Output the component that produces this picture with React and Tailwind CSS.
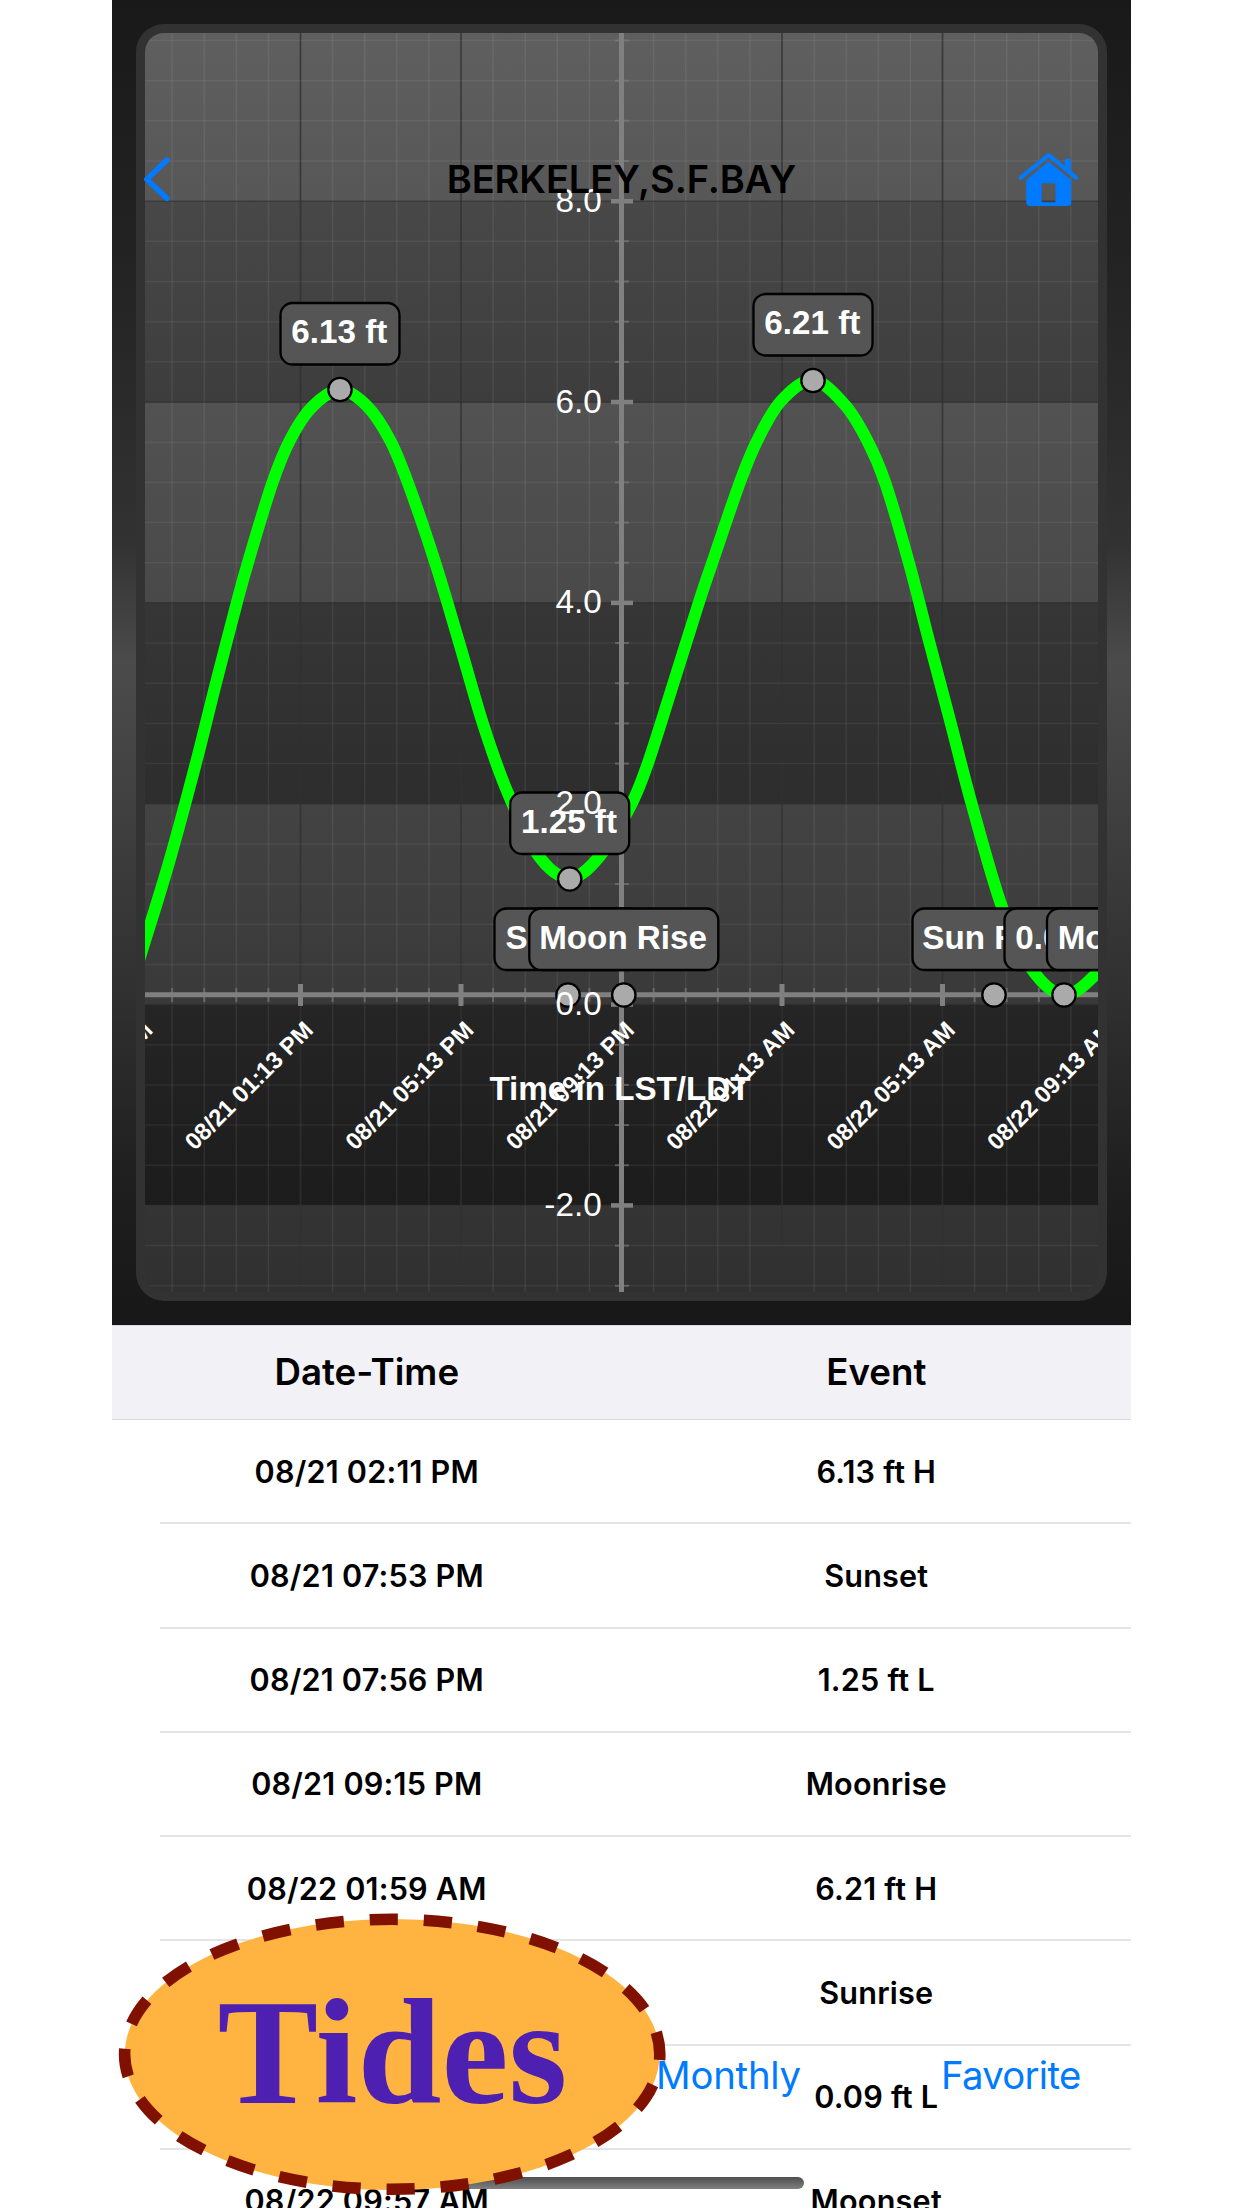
const TIDE_POINTS = [
  [120, 1020], [145, 941], [169.7, 860], [195.7, 764], [216, 683], [237, 602], [248.7, 560], [272, 484],
  [290, 440], [312, 407], [340, 390], [367, 406], [390, 440], [408, 483], [435, 562], [459, 642],
  [482.7, 723], [507, 791], [538, 855], [569.5, 878], [599, 857], [630.5, 806], [648, 763], [673.5, 683],
  [699, 602], [712.5, 562], [740, 482], [757.5, 440], [781, 401], [813, 380], [845, 405], [867, 440],
  [885, 482], [909, 563], [929.3, 642], [950.7, 723], [971.7, 804], [1002, 907], [1031, 968], [1064, 995],
  [1098, 972], [1130, 930],
];

const BANDS = [
  { y: 33, height: 168, from: "#5f5f5f", to: "#575757" },
  { y: 201, height: 201.5, from: "#484848", to: "#3d3d3d" },
  { y: 402.5, height: 200, from: "#525252", to: "#494949" },
  { y: 602.5, height: 201.5, from: "#363636", to: "#2d2d2d" },
  { y: 804, height: 200.5, from: "#434343", to: "#393939" },
  { y: 1004.5, height: 200.5, from: "#252525", to: "#1c1c1c" },
  { y: 1205, height: 87, from: "#343434", to: "#303030" },
];

const Y_LABELS = [
  { text: "8.0", y: 201 },
  { text: "6.0", y: 402 },
  { text: "4.0", y: 602.7 },
  { text: "2.0", y: 803.5 },
  { text: "0.0", y: 1004.3 },
  { text: "-2.0", y: 1205 },
];

const X_LABELS = [
  { text: "08/21 09:13 AM", x: 140 },
  { text: "08/21 01:13 PM", x: 300.5 },
  { text: "08/21 05:13 PM", x: 461 },
  { text: "08/21 09:13 PM", x: 621.5 },
  { text: "08/22 01:13 AM", x: 782 },
  { text: "08/22 05:13 AM", x: 942.5 },
  { text: "08/22 09:13 AM", x: 1103 },
];

const CALLOUTS = [
  { text: "6.13 ft", x: 340, y: 389.5, width: 119 },
  { text: "Sun Set", x: 568, y: 995, width: 147 },
  { text: "1.25 ft", x: 569.7, y: 879, width: 119 },
  { text: "Moon Rise", x: 623.8, y: 995, width: 189 },
  { text: "6.21 ft", x: 813, y: 380.5, width: 119 },
  { text: "Sun Rise", x: 994, y: 995, width: 163 },
  { text: "0.09 ft", x: 1064, y: 995, width: 119 },
  { text: "Moon Set", x: 1133, y: 995, width: 172 },
];

const EVENTS = [
  { time: "08/21 02:11 PM", event: "6.13 ft H" },
  { time: "08/21 07:53 PM", event: "Sunset" },
  { time: "08/21 07:56 PM", event: "1.25 ft L" },
  { time: "08/21 09:15 PM", event: "Moonrise" },
  { time: "08/22 01:59 AM", event: "6.21 ft H" },
  { time: "08/22 06:33 AM", event: "Sunrise" },
  { time: "08/22 08:17 AM", event: "0.09 ft L" },
  { time: "08/22 09:57 AM", event: "Moonset" },
];

// Smooth curve through all points (Catmull-Rom converted to beziers)
function smoothPath(pts) {
  let d = `M${pts[0][0]} ${pts[0][1]}`;
  for (let i = 0; i < pts.length - 1; i++) {
    const p0 = pts[i - 1] || pts[i];
    const p1 = pts[i];
    const p2 = pts[i + 1];
    const p3 = pts[i + 2] || p2;
    d += ` C${p1[0] + (p2[0] - p0[0]) / 6} ${p1[1] + (p2[1] - p0[1]) / 6}`;
    d += ` ${p2[0] - (p3[0] - p1[0]) / 6} ${p2[1] - (p3[1] - p1[1]) / 6} ${p2[0]} ${p2[1]}`;
  }
  return d;
}

const COLUMNS = Array.from({ length: 30 }, (_, i) => ({ x: 172.1 + i * 32.1, major: (i + 1) % 5 === 0 }));
const LINES = Array.from({ length: 32 }, (_, i) => ({ y: 40.5 + i * 40.17, major: (i + 1) % 5 === 0 }));

function TideChart() {
  return (
    <svg className="block h-[1325px] w-[1019px]" viewBox="112 0 1019 1325">
      <defs>
        <linearGradient id="frame" x1="0" y1="0" x2="0" y2="1">
          <stop offset="0" stopColor="#191919" />
          <stop offset="0.2" stopColor="#232323" />
          <stop offset="0.34" stopColor="#2d2d2d" />
          <stop offset="0.41" stopColor="#323232" />
          <stop offset="0.5" stopColor="#4b4b4b" />
          <stop offset="0.6" stopColor="#414141" />
          <stop offset="0.75" stopColor="#303030" />
          <stop offset="0.9" stopColor="#1e1e1e" />
          <stop offset="1" stopColor="#171717" />
        </linearGradient>
        {BANDS.map((b, i) => (
          <linearGradient key={i} id={`band${i}`} x1="0" y1="0" x2="0" y2="1">
            <stop offset="0" stopColor={b.from} />
            <stop offset="1" stopColor={b.to} />
          </linearGradient>
        ))}
        <clipPath id="plot">
          <rect x="145" y="33" width="953" height="1259" rx="19" />
        </clipPath>
      </defs>

      <rect x="112" y="0" width="1019" height="1325" fill="url(#frame)" />
      <rect x="136" y="24" width="971" height="1277" rx="28" fill="#323232" />

      <g clipPath="url(#plot)">
        {BANDS.map((b, i) => (
          <rect key={i} x="145" y={b.y} width="953" height={b.height} fill={`url(#band${i})`} />
        ))}

        {/* Grid */}
        {COLUMNS.map((c) => (
          <line
            key={c.x}
            x1={c.x}
            x2={c.x}
            y1="33"
            y2="1292"
            stroke={c.major ? "#313131" : "#fff"}
            strokeOpacity={c.major ? 0.8 : 0.07}
            strokeWidth={c.major ? 1.7 : 1.5}
          />
        ))}
        {LINES.map((l) => (
          <line
            key={l.y}
            x1="145"
            x2="1098"
            y1={l.y}
            y2={l.y}
            stroke={l.major ? "#313131" : "#fff"}
            strokeOpacity={l.major ? 0.6 : 0.06}
            strokeWidth="1.5"
          />
        ))}

        {/* Axes */}
        <line x1="145" x2="1098" y1="994.8" y2="994.8" stroke="#808080" strokeWidth="5" />
        <line x1="621.5" x2="621.5" y1="33" y2="1292" stroke="#808080" strokeWidth="5" />
        {COLUMNS.map((c) =>
          c.major ? (
            <line key={c.x} x1={c.x} x2={c.x} y1="984" y2="1006" stroke="#808080" strokeWidth="5" />
          ) : (
            <line key={c.x} x1={c.x} x2={c.x} y1="988" y2="1002" stroke="#808080" strokeOpacity="0.6" strokeWidth="2" />
          )
        )}
        {LINES.map((l) =>
          l.major ? (
            <line key={l.y} x1="611" x2="633" y1={l.y} y2={l.y} stroke="#808080" strokeWidth="4.5" />
          ) : (
            <line key={l.y} x1="615" x2="629" y1={l.y} y2={l.y} stroke="#808080" strokeOpacity="0.6" strokeWidth="2" />
          )
        )}

        <path d={smoothPath(TIDE_POINTS)} fill="none" stroke="#00ff00" strokeWidth="12" />

        {/* Markers and callouts */}
        {CALLOUTS.map((c) => (
          <circle key={c.text} cx={c.x} cy={c.y} r="11.7" fill="#aaa" stroke="#000" strokeWidth="2.3" />
        ))}
        {CALLOUTS.map((c) => (
          <g key={c.text}>
            <rect
              x={c.x - c.width / 2}
              y={c.y - 86.5}
              width={c.width}
              height="61.5"
              rx="12"
              fill="#555"
              stroke="#000"
              strokeWidth="2.3"
            />
            <text
              x={c.x - 0.7}
              y={c.y - 46.3}
              textAnchor="middle"
              className="fill-white font-['Liberation_Sans',sans-serif] text-[33.2px] font-bold"
            >
              {c.text}
            </text>
          </g>
        ))}

        {/* Axis labels */}
        {X_LABELS.map((l) => (
          <text
            key={l.text}
            transform={`translate(${l.x + 14} 1031.5) rotate(-45)`}
            textAnchor="end"
            className="fill-white font-['Liberation_Sans',sans-serif] text-[23.8px] font-bold"
          >
            {l.text}
          </text>
        ))}
        {Y_LABELS.map((l) => (
          <text
            key={l.text}
            x="601.7"
            y={l.y + 10.6}
            textAnchor="end"
            className="fill-white font-['Liberation_Sans',sans-serif] text-[33.3px]"
          >
            {l.text}
          </text>
        ))}
        <text
          x="620"
          y="1100"
          textAnchor="middle"
          className="fill-white font-['Liberation_Sans',sans-serif] text-[33.2px] font-bold"
        >
          Time in LST/LDT
        </text>
      </g>
    </svg>
  );
}

function HomeIcon() {
  return (
    <svg className="h-[54px] w-[60px]" viewBox="1019 153 60 54" fill="#007aff">
      <path d="M1020.8 177.7 L1048.7 155.2 L1076 177.7" fill="none" stroke="#007aff" strokeWidth="4.2" strokeLinecap="round" strokeLinejoin="round" />
      <path d="M1064.8 160.5 a2 2 0 0 1 2 -2 h2 a2 2 0 0 1 2 2 V173 L1064.8 167.8 Z" />
      <path
        fillRule="evenodd"
        d="M1048.7 161.5 L1071.2 180 V202 a4 4 0 0 1 -4 4 H1030.2 a4 4 0 0 1 -4 -4 V180 Z M1043 183.3 a1.3 1.3 0 0 0 -1.3 1.3 V202.3 H1055.4 V184.6 a1.3 1.3 0 0 0 -1.3 -1.3 Z"
      />
    </svg>
  );
}

function TidesBadge() {
  return (
    <svg className="absolute left-0 top-[1905px] h-[300px] w-[560px]" viewBox="112 1905 560 300">
      <ellipse cx="392.2" cy="2054.5" rx="267.4" ry="135.5" fill="#ffb340" />
      <ellipse
        cx="392.2"
        cy="2054.3"
        rx="267.6"
        ry="135"
        fill="none"
        stroke="#801100"
        strokeWidth="11.6"
        pathLength="1298.4"
        strokeDasharray="28.2 25.9"
        strokeDashoffset="22.5"
      />
      <text x="217.5" y="2102.5" className="fill-[#4d20b1] font-['Liberation_Serif',serif] text-[151px] font-bold">
        Tides
      </text>
    </svg>
  );
}

export default function App() {
  return (
    <div className="h-[2208px] w-[1242px] overflow-hidden bg-white pl-28 font-['Inter',sans-serif] text-black">
      <div className="relative h-full w-[1019px] overflow-hidden">
        <TideChart />

        {/* Event table */}
        <div className="grid h-[95px] grid-cols-2 items-center border-y border-[#dcdcdf] bg-[#f2f1f6] pb-0.5 text-center text-[36.7px] font-semibold">
          <span>Date-Time</span>
          <span>Event</span>
        </div>
        {EVENTS.map((e) => (
          <div key={e.time} className="relative grid h-[104.25px] grid-cols-2 items-center pb-px text-center text-[30.6px] font-semibold tracking-[0.2px]">
            <span>{e.time}</span>
            <span>{e.event}</span>
            <div className="absolute bottom-0 left-12 right-0 h-0.5 bg-[#e4e4e4]" />
          </div>
        ))}

        {/* Navigation bar over the chart */}
        <div className="absolute inset-x-0 top-[150px] flex h-[60px] items-center justify-between pl-8 pr-[52px]">
          <svg className="h-[48px] w-[26px]" viewBox="144 156 26 48">
            <path d="M167 160 L146.8 179.3 L167 198.5" fill="none" stroke="#007aff" strokeWidth="5.4" strokeLinecap="round" strokeLinejoin="round" />
          </svg>
          <h1 className="absolute inset-x-0 pb-0.5 text-center text-[38px] font-semibold tracking-[-0.1px]">BERKELEY,S.F.BAY</h1>
          <HomeIcon />
        </div>

        {/* Bottom toolbar */}
        <div className="absolute left-[327px] top-[2177px] h-3 w-[365px] rounded-full bg-linear-to-b from-[#4f4f4f] to-[#808080]" />
        <TidesBadge />
        <div className="absolute left-[544px] top-[2051px] flex text-[38.3px] leading-[48px] tracking-[-0.2px] text-[#007aff]">
          <span className="w-[285px]">Monthly</span>
          <span className="tracking-[-0.7px]">Favorite</span>
        </div>
      </div>
    </div>
  );
}
